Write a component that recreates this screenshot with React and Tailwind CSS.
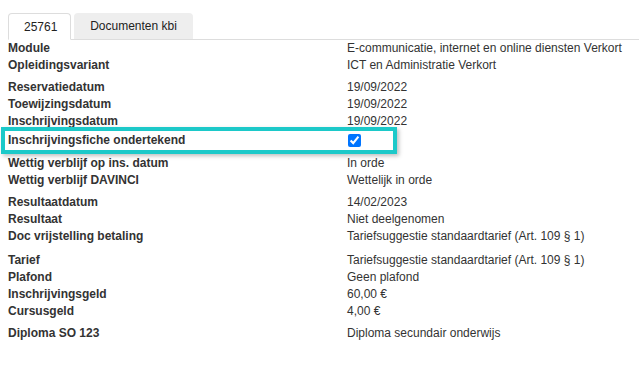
import { useState } from "react";

const groups = [
  [
    ["Module", "E-communicatie, internet en online diensten Verkort"],
    ["Opleidingsvariant", "ICT en Administratie Verkort"],
  ],
  [
    ["Reservatiedatum", "19/09/2022"],
    ["Toewijzingsdatum", "19/09/2022"],
    ["Inschrijvingsdatum", "19/09/2022"],
    ["Inschrijvingsfiche ondertekend", "__check"],
  ],
  [
    ["Wettig verblijf op ins. datum", "In orde"],
    ["Wettig verblijf DAVINCI", "Wettelijk in orde"],
  ],
  [
    ["Resultaatdatum", "14/02/2023"],
    ["Resultaat", "Niet deelgenomen"],
    ["Doc vrijstelling betaling", "Tariefsuggestie standaardtarief (Art. 109 § 1)"],
  ],
  [
    ["Tarief", "Tariefsuggestie standaardtarief (Art. 109 § 1)"],
    ["Plafond", "Geen plafond"],
    ["Inschrijvingsgeld", "60,00 €"],
    ["Cursusgeld", "4,00 €"],
  ],
  [["Diploma SO 123", "Diploma secundair onderwijs"]],
];

const App = () => {
  const [tab, setTab] = useState(0);
  const [signed, setSigned] = useState(true);

  return (
    <div className="w-[639px] h-[374px] bg-white text-[#333] text-[12px] font-['Liberation_Sans',Arial,sans-serif] overflow-hidden">
      <div className="pt-[13px]">
        <div className="ml-2 flex gap-[3px] border-b border-[#ddd]">
          <button
            onClick={() => setTab(0)}
            className="h-[27px] -mb-px px-[15px] w-[63px] bg-white border border-[#ddd] border-b-white rounded-t-[4px] text-[#222]"
          >
            25761
          </button>
          <button
            onClick={() => setTab(1)}
            className="h-[26px] w-[119px] bg-[#eee] rounded-t-[4px] text-[#222]"
          >
            Documenten kbi
          </button>
        </div>
      </div>

      {tab === 0 && (
        <div className="flex flex-col">
          {groups.map((rows, gi) => (
            <div key={gi} className={gi === 4 ? "mt-[7px]" : gi > 0 ? "mt-[5px]" : ""}>
              {rows.map(([label, value]) =>
                value === "__check" ? (
                  <div key={label} className="relative flex h-[20px] items-center pl-2">
                    <div className="w-[339px] font-bold leading-[17px]">{label}</div>
                    <div className="flex items-center">
                      <input
                        type="checkbox"
                        checked={signed}
                        onChange={(e) => setSigned(e.target.checked)}
                        className="m-0 ml-[1px] w-[13px] h-[13px]"
                      />
                    </div>
                    <div className="pointer-events-none absolute left-[1px] -top-[3px] w-[396px] h-[27px] border-4 border-[#1cc9c9] shadow-[2px_2px_4px_rgba(0,0,0,0.25)]"></div>
                  </div>
                ) : (
                  <div key={label} className="flex h-[17px] leading-[17px] pl-2">
                    <div className="w-[339px] font-bold">{label}</div>
                    <div>{value}</div>
                  </div>
                )
              )}
            </div>
          ))}
        </div>
      )}
    </div>
  );
};

export default App;
